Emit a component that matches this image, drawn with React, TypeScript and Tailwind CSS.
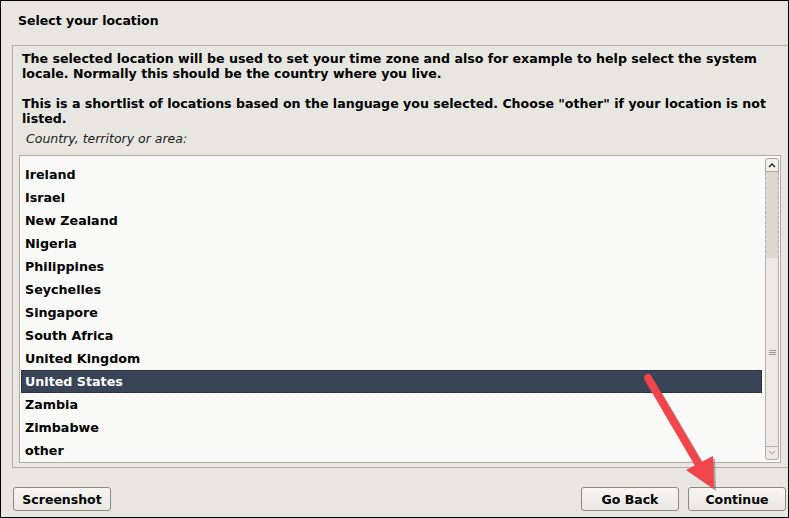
import React from 'react'

const countries = [
  'Ireland',
  'Israel',
  'New Zealand',
  'Nigeria',
  'Philippines',
  'Seychelles',
  'Singapore',
  'South Africa',
  'United Kingdom',
  'United States',
  'Zambia',
  'Zimbabwe',
  'other',
]

function Button({ label, className }: { label: string; className?: string }) {
  return (
    <button
      className={`h-[24px] w-[98px] rounded-[3px] border border-[#8c887f] bg-gradient-to-b from-[#f7f6f3] to-[#e9e7e2] text-[12.5px] font-bold leading-[15px] text-black ${className ?? ''}`}
    >
      {label}
    </button>
  )
}

function Scrollbar() {
  return (
    <div className="mt-[2px] flex h-[302px] w-[14px] flex-col">
      <div className="flex h-[14px] items-center justify-center rounded-t-[3px] border border-[#a9a49a] bg-[#f1f0ec]">
        <svg width="8" height="6" viewBox="0 0 8 6">
          <path d="M1 5 L4 2 L7 5" fill="none" stroke="#222" strokeWidth="1.4" />
        </svg>
      </div>
      <div className="h-[86px] border-x border-dashed border-[#b3ada2] bg-[#dbd7cf]" />
      <div className="flex h-[188px] items-center justify-center border-x border-[#b3ada2] bg-[#ebe9e4]">
        <div className="flex flex-col gap-[1px]">
          <div className="h-[1px] w-[7px] bg-[#9d978c]" />
          <div className="h-[1px] w-[7px] bg-[#9d978c]" />
          <div className="h-[1px] w-[7px] bg-[#9d978c]" />
        </div>
      </div>
      <div className="flex h-[14px] items-center justify-center rounded-b-[3px] border border-[#b3ada2] bg-[#eceae5]">
        <svg width="8" height="6" viewBox="0 0 8 6">
          <path d="M1 1 L4 4 L7 1" fill="none" stroke="#b9b4aa" strokeWidth="1.2" />
        </svg>
      </div>
    </div>
  )
}

export default function App() {
  return (
    <div
      className="relative flex h-[518px] w-[789px] flex-col border border-black bg-[#e8e6e1] text-black"
      style={{ fontFamily: '"DejaVu Sans", sans-serif' }}
    >
      <div className="h-[44px] pl-[17px] pt-[12px] text-[12.5px] font-bold leading-[15px]">Select your location</div>

      <div className="ml-[11px] flex h-[423px] flex-col border-y border-l border-[#b2aca1]">
        <div className="whitespace-nowrap pl-[9px] pt-[5px] text-[12.6px] font-bold leading-[15px]">
          <p>
            The selected location will be used to set your time zone and also for example to help select the system
            <br />
            locale. Normally this should be the country where you live.
          </p>
          <p className="mt-[15px]">
            This is a shortlist of locations based on the language you selected. Choose "other" if your location is not
            <br />
            listed.
          </p>
        </div>
        <div className="mt-[5px] pl-[13px] text-[12.5px] italic leading-[15px] text-[#222]">Country, territory or area:</div>

        <div className="ml-[6px] mt-[9px] flex h-[308px] w-[762px] border border-[#b2aca1] bg-[#f9faf7]">
          <div className="ml-[1px] w-[741px] pt-[7px]">
            {countries.map((c) => (
              <div
                key={c}
                className={
                  c === 'United States'
                    ? 'flex h-[23px] items-center bg-[#394456] pl-[4px] text-[12.7px] font-bold text-white outline-1 outline-dotted outline-offset-[-1px] outline-[#1b2029]'
                    : 'flex h-[23px] items-center pl-[4px] text-[12.7px] font-bold'
                }
              >
                {c}
              </div>
            ))}
          </div>
          <div className="ml-[3px]">
            <Scrollbar />
          </div>
        </div>
      </div>

      <div className="flex items-start pt-[19px]">
        <Button label="Screenshot" className="ml-[12px]" />
        <Button label="Go Back" className="ml-auto" />
        <Button label="Continue" className="ml-[9px] mr-[2px]" />
      </div>

      <svg className="pointer-events-none absolute left-0 top-0" width="789" height="518" viewBox="0 0 789 518">
        <g opacity="0.35" transform="translate(2 2)">
          <line x1="647" y1="377" x2="697" y2="462" stroke="#3a2a2a" strokeWidth="8" strokeLinecap="round" />
          <polygon points="686,469 712,455 713,488" fill="#3a2a2a" />
        </g>
        <line x1="647" y1="377" x2="697" y2="462" stroke="#f0464b" strokeWidth="8" strokeLinecap="round" />
        <polygon points="685,469 712,455 713,488" fill="#f0464b" />
      </svg>
    </div>
  )
}
